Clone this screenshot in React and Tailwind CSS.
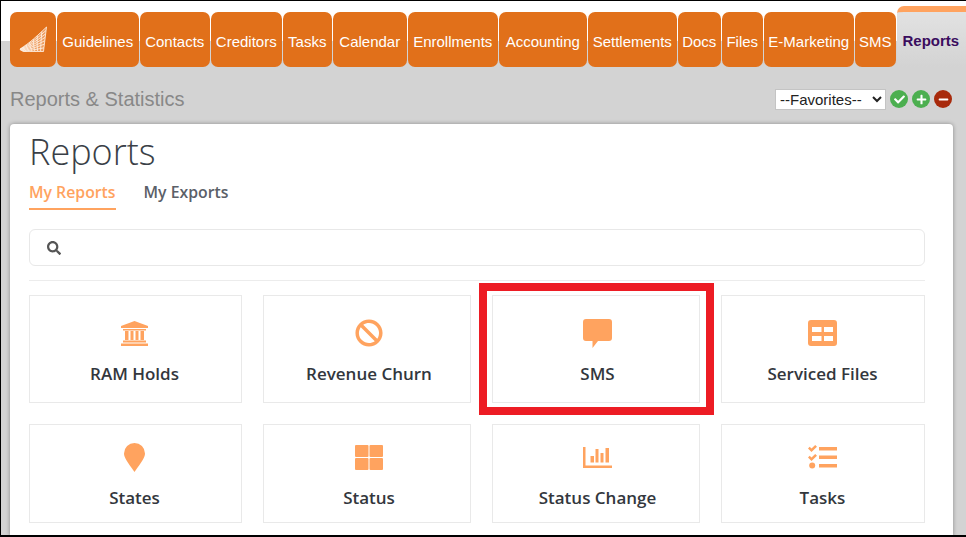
import { FaBan, FaSearch, FaCheck, FaPlus, FaMinus } from 'react-icons/fa'

const tabs = [
  { label: 'Guidelines', width: 'w-[81.5px]' },
  { label: 'Contacts', width: 'w-[69.5px]' },
  { label: 'Creditors', width: 'w-[70.5px]' },
  { label: 'Tasks', width: 'w-[48.5px]' },
  { label: 'Calendar', width: 'w-[73.5px]' },
  { label: 'Enrollments', width: 'w-[89.5px]' },
  { label: 'Accounting', width: 'w-[87.5px]' },
  { label: 'Settlements', width: 'w-[88.5px]' },
  { label: 'Docs', width: 'w-[42.5px]' },
  { label: 'Files', width: 'w-[40.5px]' },
  { label: 'E-Marketing', width: 'w-[89.5px]' },
  { label: 'SMS', width: 'w-[40.5px]' },
]

// warped grid of the logo, corners in page pixels
function logoPoint(u, v) {
  const leftX = 19 + u * u * 4
  const leftY = 49 + u * 2.5
  const rightX = 42.5 + (1 - u) * 3
  const rightY = 27 + u * 24.5
  const bow = Math.sin(v * Math.PI) * 2.5 * (1 - u)
  return [leftX + (rightX - leftX) * v - bow * 0.6, leftY + (rightY - leftY) * v + bow]
}

function LogoMark() {
  const steps = [0, 0.14, 0.28, 0.42, 0.56, 0.7, 0.85, 1]
  const line = (fn) => steps.map((t) => fn(t).join(' ')).join(' L')
  return (
    <svg width="36" height="36" viewBox="14 22 36 36" fill="none" stroke="#fff6ee" strokeWidth="0.8">
      <path d={`M${line((t) => logoPoint(0, t))} L${line((t) => logoPoint(1, 1 - t))}Z`} fill="#ee9c5f" stroke="none" />
      {steps.map((s) => <path key={`r${s}`} d={`M${line((t) => logoPoint(s, t))}`} />)}
      {steps.map((s) => <path key={`c${s}`} d={`M${line((t) => logoPoint(t, s))}`} />)}
    </svg>
  )
}

function BankIcon() {
  return (
    <svg width="27" height="25" viewBox="0 0 27 25" fill="currentColor">
      <path d="M13.500 0L27 5V7H0V5Z" />
      <rect x="2" y="8" width="23" height="1.500" />
      <rect x="4" y="10" width="3.500" height="9" />
      <rect x="9.500" y="10" width="3" height="9" />
      <rect x="14.500" y="10" width="3" height="9" />
      <rect x="19.500" y="10" width="3.500" height="9" />
      <rect x="2" y="19.500" width="23" height="2" />
      <rect y="22.500" width="27" height="2.500" />
    </svg>
  )
}

function SmsIcon() {
  return (
    <svg width="29" height="29" viewBox="0 0 29 29" fill="currentColor">
      <path d="M3 0H26A3 3 0 0 1 29 3V19A3 3 0 0 1 26 22H15L9.500 29V22H3A3 3 0 0 1 0 19V3A3 3 0 0 1 3 0Z" />
    </svg>
  )
}

function TableIcon() {
  return (
    <svg width="29" height="26" viewBox="0 0 29 26" fill="currentColor" fillRule="evenodd">
      <path d="M3 0H26A3 3 0 0 1 29 3V23A3 3 0 0 1 26 26H3A3 3 0 0 1 0 23V3A3 3 0 0 1 3 0ZM4 7V12H13.500V7ZM16 7V12H25V7ZM4 16V21H13.500V16ZM16 16V21H25V16Z" />
    </svg>
  )
}

function PinIcon() {
  return (
    <svg width="21" height="29" viewBox="0 0 21 29" fill="currentColor">
      <path d="M10.500 0A10.500 10.500 0 0 1 21 10.500C21 14.500 18 18.500 10.500 29C3 18.500 0 14.500 0 10.500A10.500 10.500 0 0 1 10.500 0Z" />
    </svg>
  )
}

function GridIcon() {
  return (
    <svg width="28" height="25" viewBox="0 0 28 25" fill="currentColor">
      <rect width="13.500" height="12" rx="1" />
      <rect x="14.500" width="13.500" height="12" rx="1" />
      <rect y="13" width="13.500" height="12" rx="1" />
      <rect x="14.500" y="13" width="13.500" height="12" rx="1" />
    </svg>
  )
}

function ChartIcon() {
  return (
    <svg width="29" height="21" viewBox="0 0 29 21" fill="currentColor">
      <path d="M0 0H2.500V18.500H29V21H0Z" />
      <rect x="7.500" y="9" width="3.500" height="6.500" />
      <rect x="12.500" y="2" width="3" height="13.500" />
      <rect x="17.500" y="6" width="3" height="9.500" />
      <rect x="22.500" y="1" width="3.500" height="14.500" />
    </svg>
  )
}

function TasksIcon() {
  return (
    <svg width="29" height="24" viewBox="0 0 29 24" fill="currentColor">
      <path d="M0 3.500L1.700 1.800L3.500 3.600L7.200 0L9 1.700L3.500 7Z" />
      <path d="M0 12.500L1.700 10.800L3.500 12.600L7.200 9L9 10.700L3.500 16Z" />
      <circle cx="4.200" cy="20.500" r="3" />
      <rect x="11" y="2" width="18" height="3.500" />
      <rect x="11" y="10.500" width="18" height="3.500" />
      <rect x="11" y="19" width="18" height="3.500" />
    </svg>
  )
}

function ReportCard({ label, icon, padding, height }) {
  return (
    <div className={`flex flex-col items-center border border-[#e9e9e9] bg-white ${padding} ${height}`}>
      <div className="flex h-[30px] items-center justify-center text-[#ffa35f]">{icon}</div>
      <p className="mt-[11px] text-[17px] leading-[30px] font-semibold text-[#33373d]">{label}</p>
    </div>
  )
}

export default function App() {
  return (
    <div className="relative h-[537px] w-[966px] overflow-hidden border-t border-b-2 border-l border-black bg-[#d3d3d3] font-['Liberation_Sans',sans-serif]">
      <nav className="flex h-[66px] items-end gap-[1.5px] bg-[linear-gradient(white_40px,#d3d3d3_40px)] pl-[9px]">
        <div className="flex h-[55px] w-[45.5px] items-center justify-center rounded-[7px] bg-[#e1701a]">
          <LogoMark />
        </div>
        {tabs.map((tab) => (
          <div
            key={tab.label}
            className={`flex h-[55px] items-center justify-center rounded-[7px] bg-[#e1701a] pt-[6px] text-[15px] text-white ${tab.width}`}
          >
            {tab.label}
          </div>
        ))}
        <div className="ml-[-0.5px] flex h-[61px] flex-1 items-center rounded-tl-[7px] border-t-[6px] border-[#ffa35f] bg-[linear-gradient(#e2e2e2,#d3d3d3)] pt-[3px] pl-[6px] text-[15px] font-bold text-[#3a0d5e]">
          Reports
        </div>
      </nav>

      <div className="flex h-[57px] items-center justify-between pt-[7px] pr-[14px] pl-[9px]">
        <h2 className="text-[20px] text-[#888888]">Reports &amp; Statistics</h2>
        <div className="flex items-center">
          <select className="h-[21px] w-[111px] border border-[#c4c4c4] bg-white text-[15px] text-[#222222]">
            <option>--Favorites--</option>
          </select>
          <span className="ml-[4px] flex size-[18px] items-center justify-center rounded-full bg-[#4caf50] text-[11px] text-white"><FaCheck /></span>
          <span className="ml-[4px] flex size-[18px] items-center justify-center rounded-full bg-[#4caf50] text-[11px] text-white"><FaPlus /></span>
          <span className="ml-[4px] flex size-[18px] items-center justify-center rounded-full bg-[#a82a0c] text-[11px] text-white"><FaMinus /></span>
        </div>
      </div>

      <main className="ml-[9px] h-[412px] w-[943px] rounded-t-[4px] bg-white pr-[28px] pl-[19px] font-['Open_Sans',sans-serif] shadow-[0_0_4px_rgba(0,0,0,0.35)]">
        <h1 className="pt-[3px] text-[36px] leading-[50px] font-light text-[#3a3f47]">Reports</h1>
        <div className="flex gap-[28px] text-[15.8px] font-semibold">
          <span className="h-[33px] border-b-2 border-[#ffa35f] leading-[30px] text-[#ffa35f]">My Reports</span>
          <span className="leading-[30px] text-[#5b6068]">My Exports</span>
        </div>
        <div className="mt-[19px] flex h-[37px] items-center rounded-[6px] border border-[#e8e8e8] pl-[17px] text-[14px] text-[#555555]">
          <FaSearch />
        </div>
        <div className="mt-[14px] h-px bg-[#ececec]" />

        <div className="mt-[14px] grid grid-cols-[213px_208px_208px_204px] gap-x-[21px] gap-y-[21px]">
          <ReportCard label="RAM Holds" icon={<BankIcon />} padding="pt-[22px] pr-[2px]" height="h-[108px]" />
          <ReportCard label="Revenue Churn" icon={<FaBan size={28} />} padding="pt-[22px] pl-[4px]" height="h-[108px]" />
          <ReportCard label="SMS" icon={<SmsIcon />} padding="pt-[22px] pl-[3px]" height="h-[108px]" />
          <ReportCard label="Serviced Files" icon={<TableIcon />} padding="pt-[22px] pr-px" height="h-[108px]" />
          <ReportCard label="States" icon={<PinIcon />} padding="pt-[17px] pr-[2px]" height="h-[99px]" />
          <ReportCard label="Status" icon={<GridIcon />} padding="pt-[17px] pl-[4px]" height="h-[99px]" />
          <ReportCard label="Status Change" icon={<ChartIcon />} padding="pt-[17px] pl-[3px]" height="h-[99px]" />
          <ReportCard label="Tasks" icon={<TasksIcon />} padding="pt-[17px] pr-px" height="h-[99px]" />
        </div>
      </main>

      {/* annotation drawn over the SMS card */}
      <div className="absolute top-[282px] left-[478px] h-[132px] w-[235px] border-[8px] border-[#ed1c24]" />
    </div>
  )
}
